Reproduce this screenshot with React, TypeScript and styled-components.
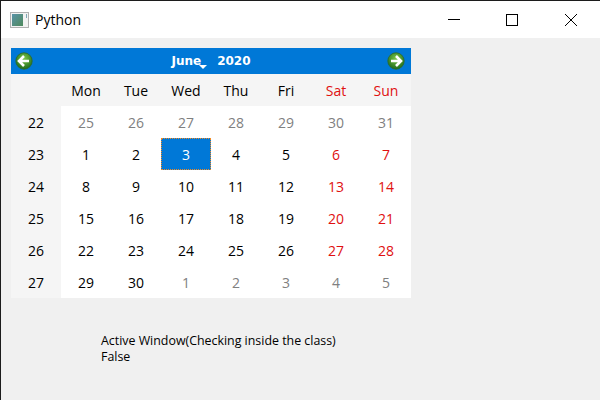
import React from 'react';
import styled, { createGlobalStyle } from 'styled-components';

const GlobalStyle = createGlobalStyle`
  html, body {
    margin: 0;
    padding: 0;
    background: #f0f0f0;
  }
`;

const Window = styled.div`
  width: 600px;
  height: 400px;
  box-sizing: border-box;
  border-top: 1px solid #1c1c1c;
  border-left: 1px solid #1c1c1c;
  background: #f0f0f0;
  font-family: "Open Sans", "Noto Sans", sans-serif;
  overflow: hidden;
`;

const TitleBar = styled.div`
  height: 37px;
  background: #fff;
  display: flex;
  align-items: center;
  padding-left: 9px;
`;

const AppTitle = styled.span`
  margin-left: 6px;
  font-size: 14px;
  color: #000;
  flex: 1;
`;

const WindowButton = styled.div<{ $gap?: number }>`
  width: 58px;
  height: 37px;
  margin-right: ${p => p.$gap ?? 0}px;
  display: flex;
  align-items: center;
  justify-content: center;
`;

const Calendar = styled.div`
  width: 400px;
  margin: 10px 0 0 10px;
`;

const NavBar = styled.div`
  height: 26px;
  background: #0078d7;
  display: flex;
  align-items: center;
  justify-content: space-between;
  padding: 0 6px 0 4px;
`;

const MonthYear = styled.div`
  display: flex;
  gap: 16px;
  color: #fff;
  font-family: "DejaVu Sans", sans-serif;
  font-weight: 700;
  font-size: 12px;
  position: relative;
  left: 1px;
`;

const Month = styled.span`
  position: relative;
`;

const MenuArrow = styled.span`
  position: absolute;
  right: -6px;
  bottom: -1px;
  width: 0;
  height: 0;
  border-left: 4px solid transparent;
  border-right: 4px solid transparent;
  border-top: 4px solid #fff;
`;

const Grid = styled.div`
  display: grid;
  grid-template-columns: repeat(8, 50px);
  grid-template-rows: repeat(7, 32px);
`;

const HeaderCell = styled.div<{ $color?: string }>`
  background: #f5f5f5;
  color: ${p => p.$color ?? '#000'};
  font-size: 14px;
  display: flex;
  align-items: center;
  justify-content: center;
`;

const WeekCell = styled(HeaderCell)`
  color: #000;
`;

const DayCell = styled.div<{ $color: string; $selected?: boolean }>`
  box-sizing: border-box;
  background: ${p => (p.$selected ? '#0078d7' : '#fff')};
  color: ${p => (p.$selected ? '#fff' : p.$color)};
  border: ${p => (p.$selected ? '1px dotted #f08a24' : 'none')};
  font-size: 14px;
  display: flex;
  align-items: center;
  justify-content: center;
`;

const Status = styled.div`
  margin: 35px 0 0 100px;
  font-size: 12.4px;
  line-height: 16px;
  color: #000;
`;

const AppIcon = () => (
  <svg width="19" height="16" viewBox="0 0 19 16">
    <defs>
      <linearGradient id="pane" x1="0" y1="0" x2="1" y2="1">
        <stop offset="0" stopColor="#5a93a8" />
        <stop offset="1" stopColor="#4f8a5c" />
      </linearGradient>
    </defs>
    <rect x="0.5" y="0.5" width="18" height="15" fill="#f2f2f2" stroke="#b0b0b0" />
    <rect x="2" y="2" width="11" height="12" fill="url(#pane)" />
    <rect x="16" y="2" width="1" height="4" fill="#7fa8b5" />
  </svg>
);

const NavArrow = ({ dir, id }: { dir: 'left' | 'right'; id: string }) => (
  <svg width="18" height="18" viewBox="0 0 18 18">
    <defs>
      <radialGradient id={id} cx="0.5" cy="0.35" r="0.65">
        <stop offset="0" stopColor="#7cc84a" />
        <stop offset="1" stopColor="#1f6b1a" />
      </radialGradient>
    </defs>
    <circle cx="9" cy="9" r="8.2" fill={`url(#${id})`} stroke="#2c6a2a" strokeWidth="0.8" />
    <path
      d={dir === 'left' ? 'M9 4 4 9 9 14M5 9h9' : 'M9 4 14 9 9 14M13 9H4'}
      fill="none"
      stroke="#fff"
      strokeWidth="2.6"
    />
  </svg>
);

const RED = '#e01010';

const headers = [
  { label: 'Mon', color: '#000' },
  { label: 'Tue', color: '#000' },
  { label: 'Wed', color: '#000' },
  { label: 'Thu', color: '#000' },
  { label: 'Fri', color: '#000' },
  { label: 'Sat', color: RED },
  { label: 'Sun', color: RED },
];

const weeks = [
  { week: 22, days: [25, 26, 27, 28, 29, 30, 31], muted: [0, 1, 2, 3, 4, 5, 6] },
  { week: 23, days: [1, 2, 3, 4, 5, 6, 7], muted: [] },
  { week: 24, days: [8, 9, 10, 11, 12, 13, 14], muted: [] },
  { week: 25, days: [15, 16, 17, 18, 19, 20, 21], muted: [] },
  { week: 26, days: [22, 23, 24, 25, 26, 27, 28], muted: [] },
  { week: 27, days: [29, 30, 1, 2, 3, 4, 5], muted: [2, 3, 4, 5, 6] },
];

const dayColor = (col: number, muted: boolean) => {
  if (muted) return '#808080';
  return col >= 5 ? RED : '#000';
};

export default function App() {
  return (
    <Window>
      <GlobalStyle />
      <TitleBar>
        <AppIcon />
        <AppTitle>Python</AppTitle>
        <WindowButton>
          <svg width="12" height="12" viewBox="0 0 12 12">
            <path d="M0 5.5h12" stroke="#000" />
          </svg>
        </WindowButton>
        <WindowButton $gap={1}>
          <svg width="12" height="12" viewBox="0 0 12 12">
            <rect x="0.5" y="0.5" width="11" height="11" fill="none" stroke="#000" />
          </svg>
        </WindowButton>
        <WindowButton>
          <svg width="12" height="12" viewBox="0 0 12 12">
            <path d="M0 0l12 12M12 0 0 12" stroke="#000" />
          </svg>
        </WindowButton>
      </TitleBar>

      <Calendar>
        <NavBar>
          <NavArrow dir="left" id="navPrev" />
          <MonthYear>
            <Month>
              June
              <MenuArrow />
            </Month>
            <span>2020</span>
          </MonthYear>
          <NavArrow dir="right" id="navNext" />
        </NavBar>
        <Grid>
          <HeaderCell />
          {headers.map(h => (
            <HeaderCell key={h.label} $color={h.color}>
              {h.label}
            </HeaderCell>
          ))}
          {weeks.map(row => (
            <React.Fragment key={row.week}>
              <WeekCell>{row.week}</WeekCell>
              {row.days.map((d, i) => (
                <DayCell
                  key={i}
                  $color={dayColor(i, row.muted.includes(i))}
                  $selected={row.week === 23 && d === 3}
                >
                  {d}
                </DayCell>
              ))}
            </React.Fragment>
          ))}
        </Grid>
      </Calendar>

      <Status>
        Active Window(Checking inside the class)
        <br />
        False
      </Status>
    </Window>
  );
}
